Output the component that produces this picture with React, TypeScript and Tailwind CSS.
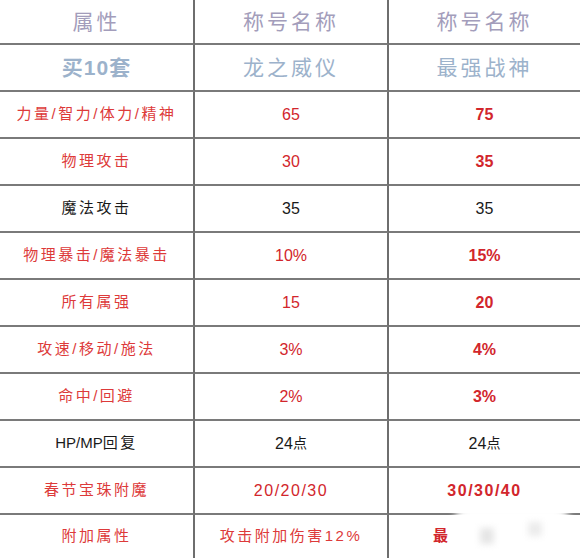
import React from "react";

type Cell = { text: string; tone: "red" | "black"; bold?: boolean };
type Row = { label: Cell; a: Cell; b: Cell };

const r = (text: string, bold = false): Cell => ({ text, tone: "red", bold });
const k = (text: string): Cell => ({ text, tone: "black" });

const rows: Row[] = [
  { label: r("力量/智力/体力/精神"), a: r("65"), b: r("75", true) },
  { label: r("物理攻击"), a: r("30"), b: r("35", true) },
  { label: k("魔法攻击"), a: k("35"), b: k("35") },
  { label: r("物理暴击/魔法暴击"), a: r("10%"), b: r("15%", true) },
  { label: r("所有属强"), a: r("15"), b: r("20", true) },
  { label: r("攻速/移动/施法"), a: r("3%"), b: r("4%", true) },
  { label: r("命中/回避"), a: r("2%"), b: r("3%", true) },
  { label: k("HP/MP回复"), a: k("24点"), b: k("24点") },
  { label: r("春节宝珠附魔"), a: r("20/20/30"), b: r("30/30/40", true) },
  { label: r("附加属性"), a: r("攻击附加伤害12%"), b: r("最", true) },
];

const font = { fontFamily: '"Liberation Sans", "Noto Sans CJK SC", sans-serif' };

function DataCell({ cell, label, border, last }: { cell: Cell; label?: boolean; border?: boolean; last?: boolean }) {
  const hp = cell.text.startsWith("HP");
  const slashNums = !label && cell.text.includes("/");
  return (
    <div
      className={[
        "flex items-center justify-center",
        last ? "h-[43px]" : "h-[47px] border-b-2 border-[#7a7a7a]",
        border ? "border-r-2 border-r-[#6e6e6e]" : "",
        label ? "text-[15px] tracking-[2.5px]" : "text-[16px]",
        slashNums ? "tracking-[1.5px]" : "",
        cell.tone === "red" ? (label ? "text-[#dd3a3a]" : "text-[#d2262c]") : "text-[#1a1a1a]",
        cell.bold ? "font-bold" : "",
      ].join(" ")}
    >
      {hp ? (
        <>
          <span className="tracking-normal">HP/MP</span>
          <span>回复</span>
        </>
      ) : cell.text.endsWith("点") ? (
        <>
          <span>{cell.text.slice(0, -1)}</span>
          <span className="text-[14px]">点</span>
        </>
      ) : (
        cell.text
      )}
    </div>
  );
}

export default function App() {
  return (
    <div className="relative w-[580px] h-[558px] bg-white overflow-hidden" style={font}>
      <div className="grid grid-cols-[195px_194px_191px]">
        {/* header */}
        <div className="h-[45px] border-b-2 border-[#7a7a7a] border-r-2 border-r-[#6e6e6e] flex items-center justify-center text-[21px] tracking-[3px] text-[#a39dbb]">
          属性
        </div>
        <div className="h-[45px] border-b-2 border-[#7a7a7a] border-r-2 border-r-[#6e6e6e] flex items-center justify-center text-[21px] tracking-[3px] text-[#a39dbb]">
          称号名称
        </div>
        <div className="h-[45px] border-b-2 border-[#7a7a7a] flex items-center justify-center text-[21px] tracking-[3px] text-[#a39dbb]">
          称号名称
        </div>

        <div className="h-[47px] border-b-2 border-[#7a7a7a] border-r-2 border-r-[#6e6e6e] flex items-center justify-center text-[21px] font-semibold tracking-[1px] text-[#9cb2cb]">
          买10套
        </div>
        <div className="h-[47px] border-b-2 border-[#7a7a7a] border-r-2 border-r-[#6e6e6e] flex items-center justify-center text-[21px] tracking-[3px] text-[#9cb2cb]">
          龙之威仪
        </div>
        <div className="h-[47px] border-b-2 border-[#7a7a7a] flex items-center justify-center text-[21px] tracking-[3px] text-[#9cb2cb]">
          最强战神
        </div>

        {rows.map((row, i) => {
          const last = i === rows.length - 1;
          return (
            <React.Fragment key={i}>
              <DataCell cell={row.label} label border last={last} />
              <DataCell cell={row.a} label={/[\u4e00-\u9fff]/.test(row.a.text) && row.a.text.length > 3} border last={last} />
              {last ? (
                <div className="h-[43px] flex items-center pl-[44px] text-[15px] font-bold text-[#d2262c]">
                  {row.b.text}
                </div>
              ) : (
                <DataCell cell={row.b} />
              )}
            </React.Fragment>
          );
        })}
      </div>

      {/* watermark smudge */}
      <div className="absolute left-[452px] top-[506px] w-[120px] h-[48px] bg-white rounded-[20px] blur-[3px]" />
      <div className="absolute left-[480px] top-[528px] w-[14px] h-[16px] bg-[#e6e6e6] blur-[3px]" />
      <div className="absolute left-[528px] top-[522px] w-[14px] h-[14px] bg-[#ececec] blur-[3px]" />
    </div>
  );
}
